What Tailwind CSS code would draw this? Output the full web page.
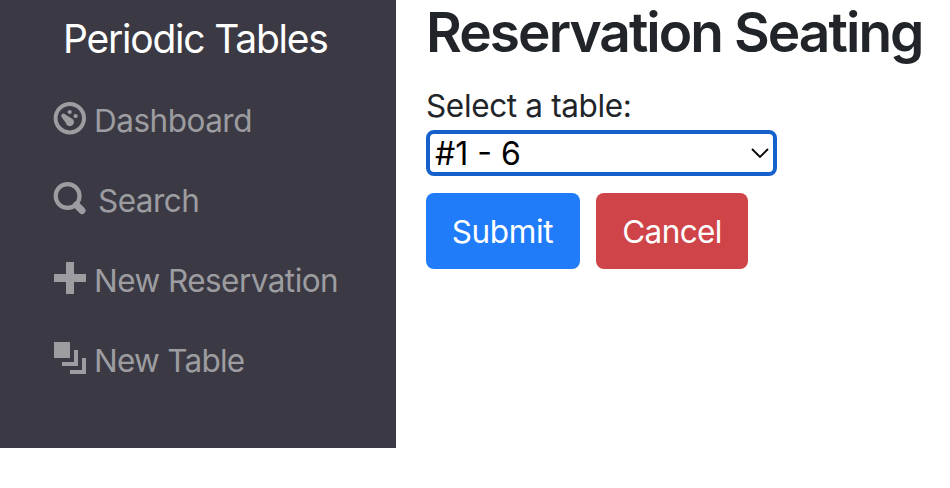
<!DOCTYPE html>
<html lang="en">
<head>
<meta charset="utf-8">
<title>Periodic Tables</title>
<script src="https://cdn.jsdelivr.net/npm/@tailwindcss/browser@4"></script>
</head>
<body class="flex h-[488px] items-start overflow-hidden bg-white font-['Inter',sans-serif] text-[31.5px] leading-[48px] tracking-[-0.35px] text-[#212529]">
<nav class="h-[448px] w-[396px] shrink-0 bg-[#3b3a44]">
  <a class="block pt-[9px] pl-[63px] text-[39px] leading-[60px] tracking-[-1.22px] text-white">Periodic Tables</a>
  <ul class="mt-[11px] pl-[53px] tracking-[-0.55px] text-[#9d9da1]">
    <li class="flex h-20 items-center">
      <svg class="mt-[-4px] mr-2 size-[33px]" viewBox="0 0 33 33" fill="currentColor"><circle cx="16.8" cy="16.2" r="14.2" fill="none" stroke="currentColor" stroke-width="4"/><circle cx="16.7" cy="10" r="2.1"/><circle cx="22.6" cy="14" r="2.1"/><path d="M8.4 13.2a2 2 0 0 1 2.8-1.5L18.3 16.2A4.1 4.1 0 1 1 12.8 20.7L9 15.7Q8 14.5 8.4 13.2Z"/></svg>
      <span class="pt-[2px] tracking-[-0.5px]">Dashboard</span></li>
    <li class="flex h-20 items-center">
      <svg class="mt-[-4px] mr-3 size-[33px]" viewBox="0 0 33 33" fill="none" stroke="currentColor"><circle cx="14.6" cy="14" r="11.9" stroke-width="4.2"/><path d="M23.5 23L29 28.5" stroke-width="7" stroke-linecap="round"/></svg>
      <span class="pt-[2px]">Search</span></li>
    <li class="flex h-20 items-center">
      <svg class="mt-[-4px] mr-2 size-[33px]" viewBox="0 0 33 33" fill="currentColor"><path d="M13 0h8v12h12v8H21v12h-8V20H1v-8h12z"/></svg>
      <span class="pt-[2px]">New Reservation</span></li>
    <li class="flex h-20 items-center">
      <svg class="mt-[-4px] mr-2 size-[33px]" viewBox="0 0 33 33" fill="currentColor"><path d="M1 0h16v16H1zM21 8h4v16H9v-4h12zM29 16h4v16H17v-4h12z"/></svg>
      <span class="pt-[2px] tracking-[-0.75px]">New Table</span></li>
  </ul>
</nav>
<main class="pl-[30px] whitespace-nowrap">
  <h1 class="text-[55px] leading-[65px] font-semibold tracking-[-1.95px]">Reservation Seating</h1>
  <label for="table" class="mt-[17px] block">Select a table:</label>
  <div class="relative h-[46px] w-[351px]">
    <select id="table" class="block h-full w-full appearance-none rounded-[8px] border-4 border-[#1560cb] bg-white pt-[2px] pl-[5px] text-[32px] leading-[36px] tracking-normal text-black outline-none"><option>#1 - 6</option></select>
    <svg class="pointer-events-none absolute top-[17px] right-[8px] h-3 w-[18px]" viewBox="0 0 18 12" fill="none" stroke="#000" stroke-width="1.8"><path d="M1 2l8 8 8-8"/></svg>
  </div>
  <div class="mt-[17px] flex gap-4 text-white">
    <button class="h-[76px] w-[154px] rounded-[8px] bg-[#207cf9] pt-[2px] pr-px">Submit</button>
    <button class="h-[76px] w-[152px] rounded-[8px] bg-[#cf4448] pt-[2px] tracking-[-0.6px]">Cancel</button>
  </div>
</main>
</body>
</html>
